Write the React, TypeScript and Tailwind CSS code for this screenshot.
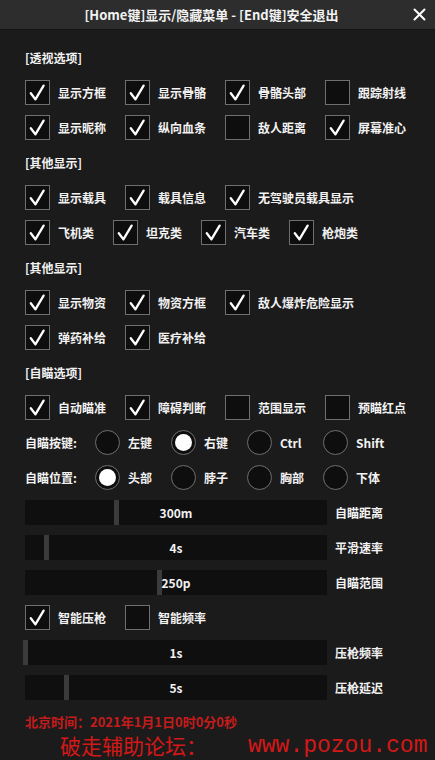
import React from "react";

const Check = ({ checked }: { checked: boolean }) => (
  <div className="relative w-[25px] h-[25px] border border-[#6f6f6f] bg-[#0e0e0e] shrink-0">
    {checked && (
      <svg className="absolute -left-px -top-px" width="25" height="25" viewBox="0 0 25 25">
        <path d="M5.8 13.2 L10.4 19.4 L18.6 5.6" stroke="#ffffff" strokeWidth="2.3" fill="none" strokeLinecap="round" strokeLinejoin="round" />
      </svg>
    )}
  </div>
);

const CheckItem = ({ label, checked, w }: { label: string; checked: boolean; w: string }) => (
  <div className={`flex items-center shrink-0 ${w}`}>
    <Check checked={checked} />
    <span className="ml-[8px] text-[12px] whitespace-nowrap">{label}</span>
  </div>
);

const Radio = ({ label, on }: { label: string; on: boolean }) => (
  <div className="flex items-center shrink-0 w-[76px]">
    <div className="w-[25px] h-[25px] rounded-full border border-[#6f6f6f] bg-[#0e0e0e] flex items-center justify-center shrink-0">
      {on && <div className="w-[17px] h-[17px] rounded-full bg-white" />}
    </div>
    <span className="ml-[8px] text-[12px] whitespace-nowrap">{label}</span>
  </div>
);

const Slider = ({ value, pos, label }: { value: string; pos: number; label: string }) => (
  <div className="flex items-center h-[25px]">
    <div className="relative w-[302px] h-[25px] shrink-0 bg-[#0f0f0f] flex items-center justify-center">
      <div className="absolute top-0 h-full w-[5px] bg-[#3b3b3b]" style={{ left: pos }} />
      <span className="relative text-[12px]">{value}</span>
    </div>
    <span className="ml-[8px] text-[12px] whitespace-nowrap">{label}</span>
  </div>
);

const Header = ({ text }: { text: string }) => (
  <div className="flex items-center h-[25px] text-[12px]">{text}</div>
);

const Row = ({ children }: { children: React.ReactNode }) => (
  <div className="flex items-center h-[25px]">{children}</div>
);

export default function App() {
  return (
    <div className="w-[435px] h-[760px] bg-[#1c1b1b] text-[#f2f2f2] font-bold font-['Noto_Sans_CJK_SC','Liberation_Sans',sans-serif] overflow-hidden">
      <div className="relative h-[30px] bg-[#2c2d2c] border-b border-[#141414] flex items-center justify-center">
        <span className="text-[13px] pr-[12px] whitespace-nowrap">[Home键]显示/隐藏菜单 - [End键]安全退出</span>
        <svg className="absolute right-[9px] top-[8px]" width="13" height="13" viewBox="0 0 13 13">
          <path d="M1.5 1.5 L11.5 11.5 M11.5 1.5 L1.5 11.5" stroke="#ffffff" strokeWidth="2" strokeLinecap="round" />
        </svg>
      </div>
      <div className="px-[25px] pt-[15px] flex flex-col gap-[10px]">
        <Header text="[透视选项]" />
        <Row>
          <CheckItem w="w-[100px]" label="显示方框" checked />
          <CheckItem w="w-[100px]" label="显示骨骼" checked />
          <CheckItem w="w-[100px]" label="骨骼头部" checked />
          <CheckItem w="w-[85px]" label="跟踪射线" checked={false} />
        </Row>
        <Row>
          <CheckItem w="w-[100px]" label="显示昵称" checked />
          <CheckItem w="w-[100px]" label="纵向血条" checked />
          <CheckItem w="w-[100px]" label="敌人距离" checked={false} />
          <CheckItem w="w-[85px]" label="屏幕准心" checked />
        </Row>
        <Header text="[其他显示]" />
        <Row>
          <CheckItem w="w-[100px]" label="显示载具" checked />
          <CheckItem w="w-[100px]" label="载具信息" checked />
          <CheckItem w="w-[150px]" label="无驾驶员载具显示" checked />
        </Row>
        <Row>
          <CheckItem w="w-[88px]" label="飞机类" checked />
          <CheckItem w="w-[88px]" label="坦克类" checked />
          <CheckItem w="w-[88px]" label="汽车类" checked />
          <CheckItem w="w-[88px]" label="枪炮类" checked />
        </Row>
        <Header text="[其他显示]" />
        <Row>
          <CheckItem w="w-[100px]" label="显示物资" checked />
          <CheckItem w="w-[100px]" label="物资方框" checked />
          <CheckItem w="w-[150px]" label="敌人爆炸危险显示" checked />
        </Row>
        <Row>
          <CheckItem w="w-[100px]" label="弹药补给" checked />
          <CheckItem w="w-[100px]" label="医疗补给" checked />
        </Row>
        <Header text="[自瞄选项]" />
        <Row>
          <CheckItem w="w-[100px]" label="自动瞄准" checked />
          <CheckItem w="w-[100px]" label="障碍判断" checked />
          <CheckItem w="w-[100px]" label="范围显示" checked={false} />
          <CheckItem w="w-[85px]" label="预瞄红点" checked={false} />
        </Row>
        <Row>
          <span className="w-[70px] shrink-0 text-[12px] whitespace-nowrap">自瞄按键:</span>
          <Radio label="左键" on={false} />
          <Radio label="右键" on />
          <Radio label="Ctrl" on={false} />
          <Radio label="Shift" on={false} />
        </Row>
        <Row>
          <span className="w-[70px] shrink-0 text-[12px] whitespace-nowrap">自瞄位置:</span>
          <Radio label="头部" on />
          <Radio label="脖子" on={false} />
          <Radio label="胸部" on={false} />
          <Radio label="下体" on={false} />
        </Row>
        <Slider value="300m" pos={89} label="自瞄距离" />
        <Slider value="4s" pos={19} label="平滑速率" />
        <Slider value="250p" pos={132} label="自瞄范围" />
        <Row>
          <CheckItem w="w-[100px]" label="智能压枪" checked />
          <CheckItem w="w-[100px]" label="智能频率" checked={false} />
        </Row>
        <Slider value="1s" pos={-2} label="压枪频率" />
        <Slider value="5s" pos={39} label="压枪延迟" />
      </div>
      <div className="pl-[25px] mt-[14px] h-[16px] flex items-center text-[13px] text-[#c41c1c] whitespace-nowrap">
        北京时间：2021年1月1日0时0分0秒
      </div>
      <div className="pl-[60px] mt-[2px] h-[28px] flex items-center whitespace-nowrap text-[#d41818] font-normal">
        <span className="text-[21px] font-['Noto_Sans_CJK_SC',serif]">破走辅助论坛：</span>
        <span className="ml-[41px] text-[23px] font-['Liberation_Mono',monospace]">www.pozou.com</span>
      </div>
    </div>
  );
}
